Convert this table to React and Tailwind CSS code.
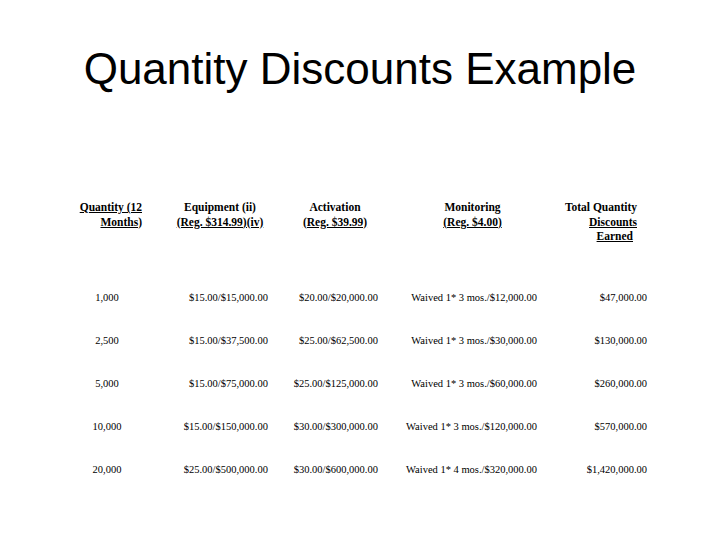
import React from "react";

const rows = [
  ["1,000", "$15.00/$15,000.00", "$20.00/$20,000.00", "Waived 1* 3 mos./$12,000.00", "$47,000.00"],
  ["2,500", "$15.00/$37,500.00", "$25.00/$62,500.00", "Waived 1* 3 mos./$30,000.00", "$130,000.00"],
  ["5,000", "$15.00/$75,000.00", "$25.00/$125,000.00", "Waived 1* 3 mos./$60,000.00", "$260,000.00"],
  ["10,000", "$15.00/$150,000.00", "$30.00/$300,000.00", "Waived 1* 3 mos./$120,000.00", "$570,000.00"],
  ["20,000", "$25.00/$500,000.00", "$30.00/$600,000.00", "Waived 1* 4 mos./$320,000.00", "$1,420,000.00"],
];

export default function App() {
  return (
    <div className="w-[720px] h-[540px] bg-white text-black overflow-hidden">
      <h1
        className="pt-[47px] text-center text-[44px] leading-none"
        style={{ fontFamily: '"Liberation Sans", Arial, sans-serif' }}
      >
        Quantity Discounts Example
      </h1>
      <div
        className="ml-[60px] mt-[109px] w-[600px]"
        style={{ fontFamily: '"Liberation Serif", "Times New Roman", serif' }}
      >
        <div className="grid grid-cols-[100px_120px_110px_160px_110px] text-[11.5px] leading-[14.5px] font-bold">
          <div className="text-right pr-[18px] pl-[12px]">
            <span className="underline">Quantity (12 Months)</span>
          </div>
          <div className="text-center">
            Equipment (ii)
            <br />
            <span className="underline">(Reg. $314.99)(iv)</span>
          </div>
          <div className="text-center">
            Activation
            <br />
            <span className="underline">(Reg. $39.99)</span>
          </div>
          <div className="text-center pl-[5px]">
            Monitoring
            <br />
            <span className="underline">(Reg. $4.00)</span>
          </div>
          <div className="text-right pr-[23px]">
            Total Quantity
            <br />
            <span className="underline">Discounts</span>
            <br />
            <span className="underline pr-[4px]">Earned</span>
          </div>
        </div>
        <div className="mt-[33px] text-[10.5px]">
          {rows.map((r, i) => (
            <div
              key={i}
              className="grid grid-cols-[100px_120px_110px_160px_110px] h-[43px] items-center"
            >
              <div className="text-center pr-[6px]">{r[0]}</div>
              <div className="text-right pr-[12px]">{r[1]}</div>
              <div className="text-right pr-[12px]">{r[2]}</div>
              <div className="text-right pr-[13px]">{r[3]}</div>
              <div className="text-right pr-[13px]">{r[4]}</div>
            </div>
          ))}
        </div>
      </div>
    </div>
  );
}
